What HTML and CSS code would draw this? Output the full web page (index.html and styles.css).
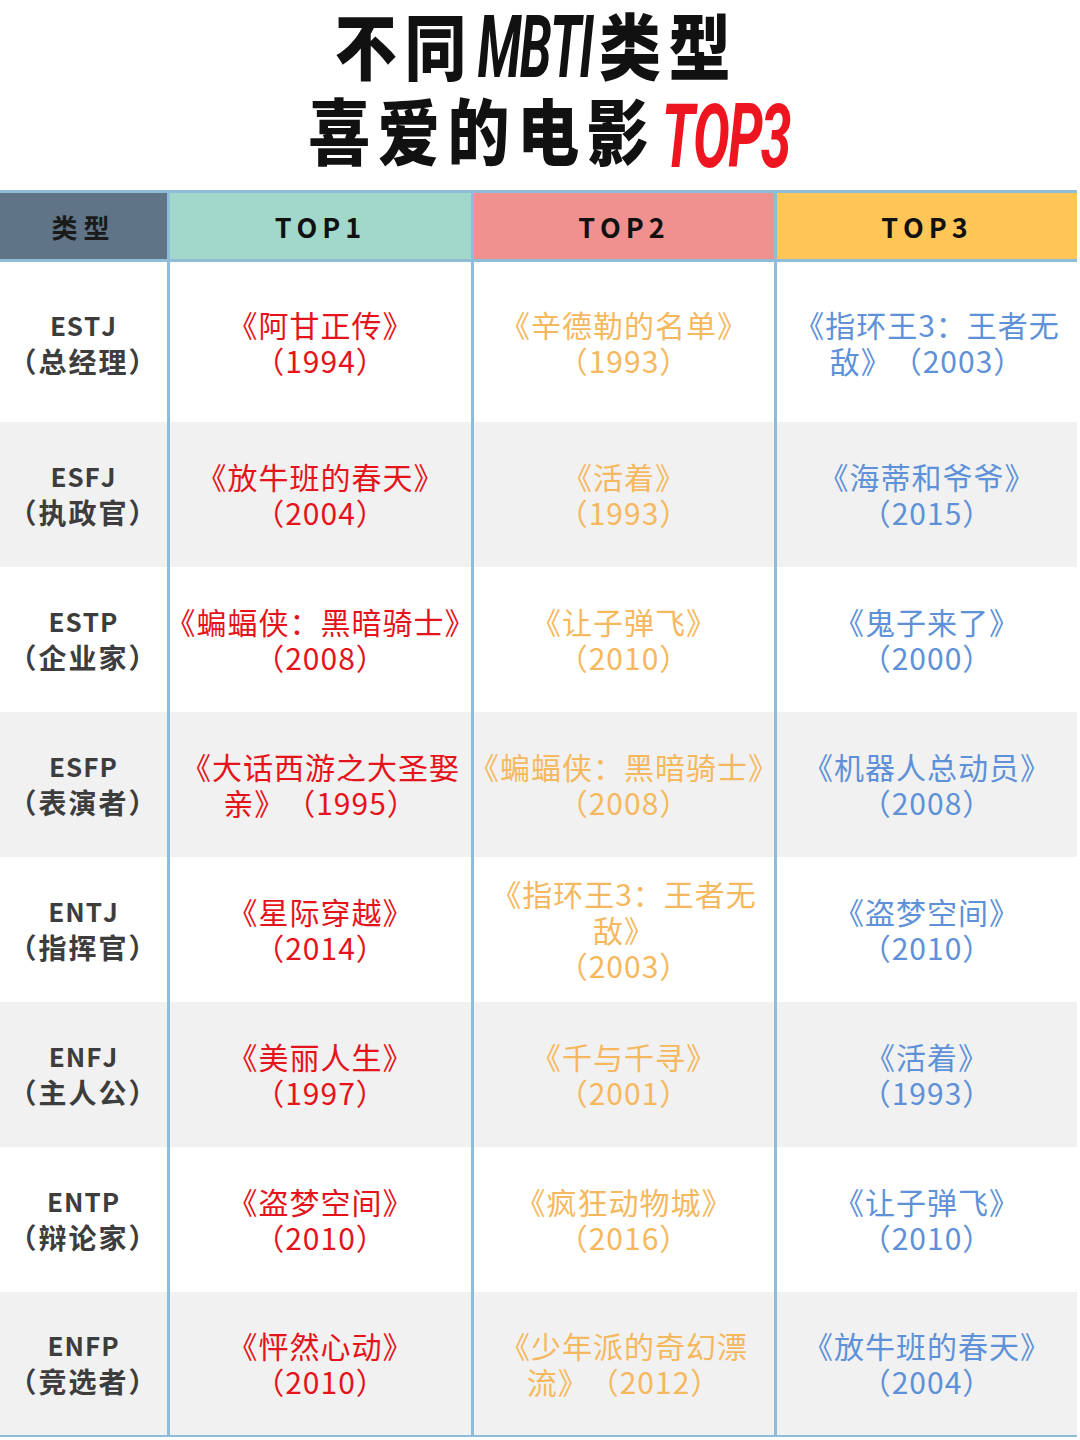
FILE: index.html
```html
<!DOCTYPE html>
<html lang="zh-CN">
<head>
<meta charset="utf-8">
<title>不同MBTI类型喜爱的电影TOP3</title>
<link rel="stylesheet" href="styles.css">
</head>
<body>
<header class="title">
  <div class="t1">不同<span class="lat">MBTI</span>类型</div>
  <div class="t2">喜爱的电影<span class="lat red">TOP3</span></div>
</header>
<main class="table">
  <div class="hd h0">类型</div>
  <div class="hd h1">TOP1</div>
  <div class="hd h2">TOP2</div>
  <div class="hd h3">TOP3</div>

  <div class="c type first"><p class="in"><span class="code">ESTJ</span><br>（总经理）</p></div>
  <div class="c red first"><p class="in">《阿甘正传》<br>（1994）</p></div>
  <div class="c org first"><p class="in">《辛德勒的名单》<br>（1993）</p></div>
  <div class="c blu first"><p class="in">《指环王3：王者无<br>敌》（2003）</p></div>

  <div class="c type alt"><p class="in"><span class="code">ESFJ</span><br>（执政官）</p></div>
  <div class="c red alt"><p class="in">《放牛班的春天》<br>（2004）</p></div>
  <div class="c org alt"><p class="in">《活着》<br>（1993）</p></div>
  <div class="c blu alt"><p class="in">《海蒂和爷爷》<br>（2015）</p></div>

  <div class="c type"><p class="in"><span class="code">ESTP</span><br>（企业家）</p></div>
  <div class="c red"><p class="in">《蝙蝠侠：黑暗骑士》<br>（2008）</p></div>
  <div class="c org"><p class="in">《让子弹飞》<br>（2010）</p></div>
  <div class="c blu"><p class="in">《鬼子来了》<br>（2000）</p></div>

  <div class="c type alt"><p class="in"><span class="code">ESFP</span><br>（表演者）</p></div>
  <div class="c red alt"><p class="in">《大话西游之大圣娶<br>亲》（1995）</p></div>
  <div class="c org alt"><p class="in">《蝙蝠侠：黑暗骑士》<br>（2008）</p></div>
  <div class="c blu alt"><p class="in">《机器人总动员》<br>（2008）</p></div>

  <div class="c type"><p class="in"><span class="code">ENTJ</span><br>（指挥官）</p></div>
  <div class="c red"><p class="in">《星际穿越》<br>（2014）</p></div>
  <div class="c org"><p class="in">《指环王3：王者无<br>敌》<br>（2003）</p></div>
  <div class="c blu"><p class="in">《盗梦空间》<br>（2010）</p></div>

  <div class="c type alt"><p class="in"><span class="code">ENFJ</span><br>（主人公）</p></div>
  <div class="c red alt"><p class="in">《美丽人生》<br>（1997）</p></div>
  <div class="c org alt"><p class="in">《千与千寻》<br>（2001）</p></div>
  <div class="c blu alt"><p class="in">《活着》<br>（1993）</p></div>

  <div class="c type"><p class="in"><span class="code">ENTP</span><br>（辩论家）</p></div>
  <div class="c red"><p class="in">《盗梦空间》<br>（2010）</p></div>
  <div class="c org"><p class="in">《疯狂动物城》<br>（2016）</p></div>
  <div class="c blu"><p class="in">《让子弹飞》<br>（2010）</p></div>

  <div class="c type alt last"><p class="in"><span class="code">ENFP</span><br>（竞选者）</p></div>
  <div class="c red alt last"><p class="in">《怦然心动》<br>（2010）</p></div>
  <div class="c org alt last"><p class="in">《少年派的奇幻漂<br>流》（2012）</p></div>
  <div class="c blu alt last"><p class="in">《放牛班的春天》<br>（2004）</p></div>
</main>
</body>
</html>
```

FILE: styles.css
```css
html, body {
  margin: 0;
  padding: 0;
  background: #ffffff;
}
body {
  width: 1080px;
  height: 1440px;
  overflow: hidden;
  font-family: "Noto Sans CJK SC", "Noto Sans", sans-serif;
  text-spacing-trim: space-all;
  font-kerning: none;
}
.title {
  height: 190px;
  box-sizing: border-box;
  padding-bottom: 8px;
  display: flex;
  flex-direction: column;
  align-items: center;
  justify-content: center;
  color: #111111;
  font-weight: 900;
  font-size: 72px;
  line-height: 80px;
  letter-spacing: 9px;
}
.title .t1,
.title .t2 {
  transform: scaleX(0.86);
  white-space: nowrap;
}
.title .t1 {
  margin-right: 6px;
}
.title .t2 {
  margin-left: 18px;
}
.title .lat {
  font-family: "Roboto", "Liberation Sans", sans-serif;
  font-style: italic;
  font-weight: 700;
  font-size: 60px;
  line-height: 1;
  letter-spacing: -2px;
  display: inline-block;
  vertical-align: -4px;
  transform-origin: 50% 88%;
  transform: scaleY(1.45);
}
.title .t1 .lat {
  margin-left: 4px;
  margin-right: 8px;
}
.title .lat.red {
  color: #ef1520;
  font-size: 64px;
  margin-left: 6px;
  vertical-align: -9px;
  transform: scaleY(1.4);
}
.table {
  width: 1077px;
  display: grid;
  grid-template-columns: 167px 301px 300px 300px;
  grid-template-rows: 69px 160px repeat(6, 145px) 143px;
  column-gap: 3px;
  background: #8fbcd6;
  border-top: 3px solid #8fbcd6;
  border-bottom: 2px solid #8fbcd6;
}
.hd {
  border-bottom: 3px solid #8fbcd6;
  display: flex;
  align-items: center;
  justify-content: center;
  font-family: "Noto Sans CJK SC", "Open Sans", sans-serif;
  font-weight: 700;
  font-size: 27px;
  letter-spacing: 5px;
  color: #111111;
}
.h0 { background: #607487; font-size: 26px; letter-spacing: 6px; color: #1a1a1a; }
.h1 { background: #a2d8cb; }
.h2 { background: #f09190; }
.h3 { background: #fdc657; }
.c {
  background: #ffffff;
  display: flex;
  align-items: center;
  justify-content: center;
  text-align: center;
  font-size: 30px;
  letter-spacing: 1px;
  line-height: 36px;
  white-space: nowrap;
  padding-bottom: 2px;
}
.c .in {
  margin: 0;
}
.c.alt { background: #f1f1f1; }
.c.first { padding-bottom: 0; }
.type {
  color: #3d3d3d;
  font-weight: 700;
  font-size: 28px;
  letter-spacing: 2px;
}
.type .code {
  font-size: 26px;
  letter-spacing: 1px;
}
.red { color: #e5141b; }
.org { color: #f6b85e; }
.blu { color: #5e91d7; }
```
